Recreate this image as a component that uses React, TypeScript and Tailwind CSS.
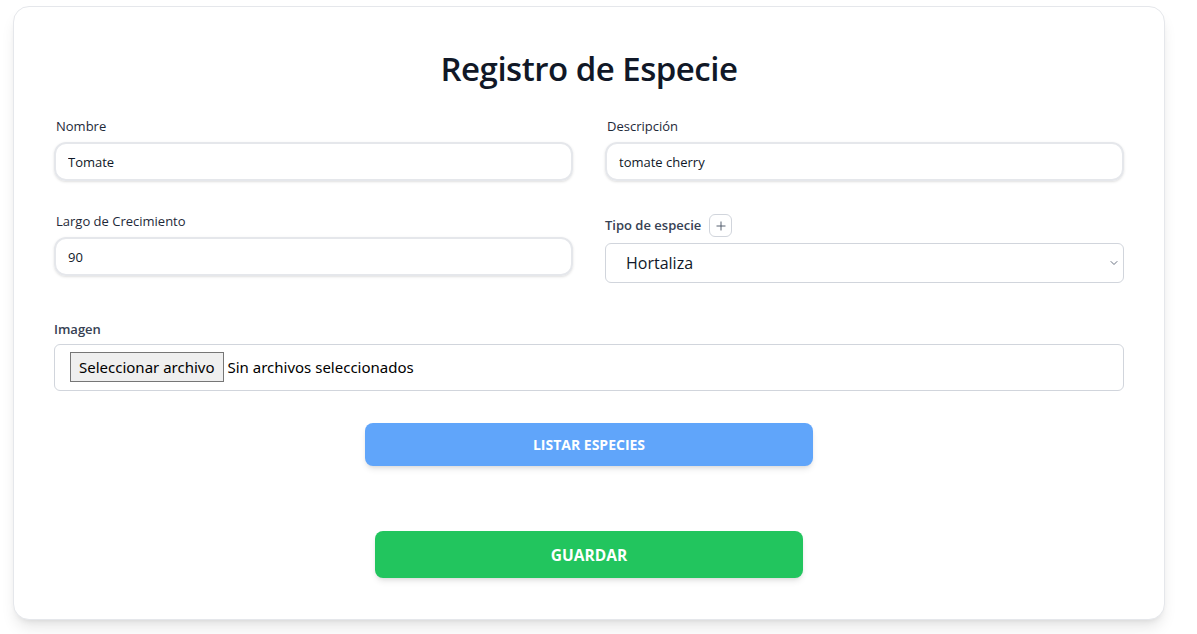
import { Plus, ChevronDown } from "lucide-react";

function Field({ label, value }: { label: string; value: string }) {
  return (
    <div className="flex flex-col">
      <label className="ml-[2px] text-[13px] text-gray-800 mb-[6px] leading-5">{label}</label>
      <input
        readOnly
        value={value}
        className="h-[39px] w-full rounded-xl border-2 border-gray-200 px-3 text-[13px] text-gray-900 shadow-sm outline-none"
      />
    </div>
  );
}

function App() {
  return (
    <div className="min-h-screen bg-white" style={{ fontFamily: '"Open Sans", "Noto Sans", sans-serif' }}>
      <div className="ml-[13px] mt-[6px] w-[1152px] h-[614px] rounded-2xl border border-gray-200 bg-white px-10 pt-[42px] shadow-lg">
        <h1 className="text-center text-[33px] font-semibold text-[#111827] leading-10 tracking-[-0.5px] mb-[27px]">
          Registro de Especie
        </h1>

        <div className="grid grid-cols-2 gap-x-8 gap-y-[30px]">
          <Field label="Nombre" value="Tomate" />
          <Field label="Descripción" value="tomate cherry" />
          <Field label="Largo de Crecimiento" value="90" />

          <div className="flex flex-col mt-[3px]">
            <div className="flex items-center gap-2 mb-[6px]">
              <span className="text-[13px] font-semibold text-gray-700">Tipo de especie</span>
              <button className="flex h-[23px] w-[23px] items-center justify-center rounded-md border border-gray-300 text-gray-600">
                <Plus className="h-[14px] w-[14px]" strokeWidth={1.6} />
              </button>
            </div>
            <div className="flex h-10 items-center justify-between rounded-md border border-gray-300 pl-5 pr-[3px]">
              <span className="text-[16px] text-gray-900">Hortaliza</span>
              <ChevronDown className="h-3 w-3 text-gray-500" strokeWidth={2} />
            </div>
          </div>
        </div>

        <div className="mt-[37px] flex flex-col">
          <span className="text-[13px] font-semibold text-gray-700 mb-[4px]">Imagen</span>
          <div className="flex h-[47px] items-center rounded-md border border-gray-300 px-[15px]">
            <span
              className="flex h-[30px] items-center border border-[#767676] bg-[#efefef] px-2 text-[15px] text-black"
              style={{ fontFamily: '"Noto Sans", sans-serif' }}
            >
              Seleccionar archivo
            </span>
            <span className="ml-1 text-[15px] text-black" style={{ fontFamily: '"Noto Sans", sans-serif' }}>
              Sin archivos seleccionados
            </span>
          </div>
        </div>

        <div className="mt-8 flex justify-center">
          <button className="h-[43px] w-[448px] rounded-lg bg-[#60a5fa] text-[14px] font-bold uppercase text-white shadow-md">
            Listar Especies
          </button>
        </div>

        <div className="mt-[65px] flex justify-center">
          <button className="h-[47px] w-[428px] rounded-lg bg-[#22c55e] pt-[3px] text-[15.5px] font-bold uppercase text-white shadow-md">
            Guardar
          </button>
        </div>
      </div>
    </div>
  );
}

export default App;
